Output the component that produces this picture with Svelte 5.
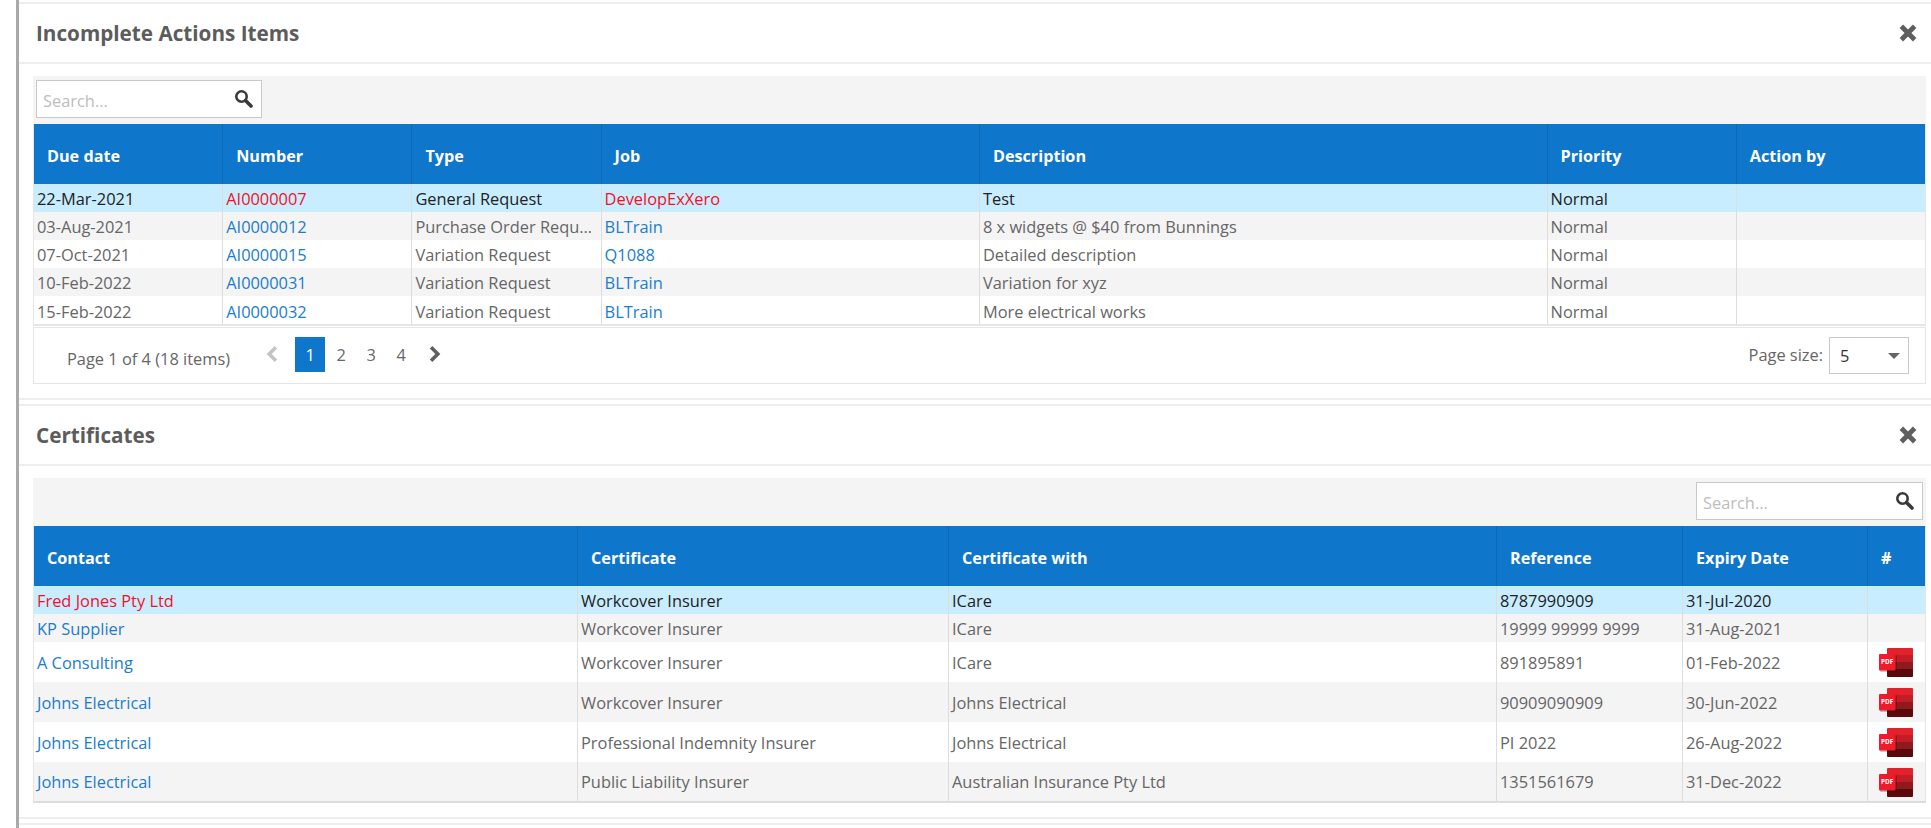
<script>
  const actions = [
    ['22-Mar-2021','AI0000007','General Request','DevelopExXero','Test','Normal',''],
    ['03-Aug-2021','AI0000012','Purchase Order Request','BLTrain','8 x widgets @ $40 from Bunnings','Normal',''],
    ['07-Oct-2021','AI0000015','Variation Request','Q1088','Detailed description','Normal',''],
    ['10-Feb-2022','AI0000031','Variation Request','BLTrain','Variation for xyz','Normal',''],
    ['15-Feb-2022','AI0000032','Variation Request','BLTrain','More electrical works','Normal','']
  ];
  const actionHead = ['Due date','Number','Type','Job','Description','Priority','Action by'];
  const certHead = ['Contact','Certificate','Certificate with','Reference','Expiry Date','#'];
  const certs = [
    ['Fred Jones Pty Ltd','Workcover Insurer','ICare','8787990909','31-Jul-2020',false],
    ['KP Supplier','Workcover Insurer','ICare','19999 99999 9999','31-Aug-2021',false],
    ['A Consulting','Workcover Insurer','ICare','891895891','01-Feb-2022',true],
    ['Johns Electrical','Workcover Insurer','Johns Electrical','90909090909','30-Jun-2022',true],
    ['Johns Electrical','Professional Indemnity Insurer','Johns Electrical','PI 2022','26-Aug-2022',true],
    ['Johns Electrical','Public Liability Insurer','Australian Insurance Pty Ltd','1351561679','31-Dec-2022',true]
  ];
</script>

{#snippet closeIcon()}
  <svg class="close" viewBox="0 0 18 18" aria-label="Close"><path d="M3 3 15 15M15 3 3 15" stroke="#5f5f5f" stroke-width="4.4" fill="none"/></svg>
{/snippet}

{#snippet searchBox()}
  <div class="search">
    <span class="ph">Search...</span>
    <svg class="mag" viewBox="0 0 19 19"><circle cx="7.5" cy="7.5" r="5.2" fill="none" stroke="#3a3a3a" stroke-width="2.6"/><path d="M11.5 11.5 17 17" stroke="#3a3a3a" stroke-width="3.6" stroke-linecap="round"/></svg>
  </div>
{/snippet}

{#snippet pdf()}
  <svg class="pdf" viewBox="0 0 34 29">
    <rect x="8" y="0" width="26" height="8" rx="1" fill="#e3202b"/>
    <rect x="8" y="7" width="26" height="8" fill="#bf1e27"/>
    <rect x="8" y="14" width="26" height="8" fill="#8f1a1e"/>
    <rect x="8" y="21" width="26" height="8" rx="1" fill="#5a0a0c"/>
    <rect x="1" y="7" width="17" height="17" rx="1" fill="#000" opacity=".22"/>
    <rect x="0" y="6" width="16.5" height="16.5" rx="1" fill="#ee1c2a"/>
    <text x="8.2" y="16.4" text-anchor="middle" class="pdft">PDF</text>
  </svg>
{/snippet}

<div class="page">
  <section class="panel">
    <header class="phead"><h2>Incomplete Actions Items</h2>{@render closeIcon()}</header>
    <div class="pbody">
      <div class="toolbar">{@render searchBox()}</div>
      <table class="grid actions">
        <thead><tr>{#each actionHead as h}<th>{h}</th>{/each}</tr></thead>
        <tbody>
          {#each actions as r, i}
            <tr class:sel={i === 0} class:alt={i % 2 === 1}>
              <td>{r[0]}</td>
              <td class="link">{r[1]}</td>
              <td>{r[2]}</td>
              <td class="link">{r[3]}</td>
              <td>{r[4]}</td>
              <td>{r[5]}</td>
              <td>{r[6]}</td>
            </tr>
          {/each}
        </tbody>
      </table>
      <div class="pager">
        <span class="info">Page 1 of 4 (18 items)</span>
        <svg class="chev prev" viewBox="0 0 12 16"><path d="M9.5 2 3.5 8l6 6" fill="none" stroke="#c4c4c4" stroke-width="3.2"/></svg>
        <span class="pn cur">1</span><span class="pn">2</span><span class="pn">3</span><span class="pn">4</span>
        <svg class="chev next" viewBox="0 0 12 16"><path d="M2.5 2l6 6-6 6" fill="none" stroke="#5f5f5f" stroke-width="3.2"/></svg>
        <span class="size">Page size:</span>
        <div class="select"><span>5</span><i class="caret"></i></div>
      </div>
    </div>
  </section>

  <section class="panel second">
    <header class="phead"><h2>Certificates</h2>{@render closeIcon()}</header>
    <div class="pbody">
      <div class="toolbar right">{@render searchBox()}</div>
      <table class="grid certs">
        <thead><tr>{#each certHead as h}<th>{h}</th>{/each}</tr></thead>
        <tbody>
          {#each certs as r, i}
            <tr class:sel={i === 0} class:alt={i % 2 === 1}>
              <td class="link">{r[0]}</td>
              <td>{r[1]}</td>
              <td>{r[2]}</td>
              <td>{r[3]}</td>
              <td>{r[4]}</td>
              <td class="ic">{#if r[5]}{@render pdf()}{/if}</td>
            </tr>
          {/each}
        </tbody>
      </table>
    </div>
  </section>
  <div class="next-panel"></div>
</div>

<style>
  :global(body) { margin: 0; background: #fff; }
  .page {
    margin-left: 16px;
    border-left: 3px solid #a9a9a9;
    height: 828px;
    box-sizing: border-box;
    padding-top: 2px;
    overflow: hidden;
    font-family: "Open Sans", "Noto Sans", sans-serif;
    font-size: 16.4px;
    color: #666;
  }
  .panel {
    border-top: 2px solid #eee;
    border-bottom: 2px solid #eee;
    margin-bottom: 4px;
  }
  .phead {
    height: 58px;
    border-bottom: 2px solid #eee;
    display: flex;
    align-items: center;
    justify-content: space-between;
    padding: 0 13px 0 17px;
  }
  h2 {
    margin: 0;
    font-size: 20.7px;
    font-weight: 700;
    color: #5c5c5c;
  }
  .close { width: 20px; height: 20px; }
  .pbody { padding: 12px 0 14px 14px; margin-right: 5px; }
  .toolbar {
    background: #f4f4f4;
    height: 48px;
    display: flex;
    align-items: flex-start;
    padding: 4px 3px 0;
    box-sizing: border-box;
  }
  .toolbar.right { justify-content: flex-end; }
  .search {
    width: 226px;
    height: 38px;
    box-sizing: border-box;
    border: 1px solid #c9c9c9;
    background: #fff;
    display: flex;
    align-items: center;
    justify-content: space-between;
    padding: 0 8px 0 6px;
  }
  .toolbar.right .search { width: 227px; }
  .ph { color: #bdbdbd; padding-top: 2px; }
  .mag { width: 19px; height: 19px; margin-top: -2px; }
  .grid {
    width: 100%;
    table-layout: fixed;
    border-collapse: collapse;
  }
  .grid th {
    background: #0e76cb;
    color: #fff;
    font-weight: 700;
    font-size: 16.2px;
    text-align: left;
    height: 60px;
    padding: 3px 13px 0;
    border-right: 1px solid #0c69b5;
    box-sizing: border-box;
  }
  .grid th:last-child, .grid td:last-child { border-right: 0; }
  .grid td {
    height: 28px;
    padding: 1px 3px 0;
    border-right: 1px solid #ddd;
    white-space: nowrap;
    overflow: hidden;
    text-overflow: ellipsis;
    box-sizing: border-box;
    line-height: 20px;
  }
  .grid tr.alt td { background: #f4f4f4; }
  .grid tr.sel td { background: #c8edff; color: #222; }
  .link { color: #1a7dd0; }
  .grid tr.sel td.link { color: #f5101f; }
  .actions { border: 1px solid #e6e6e6; border-top: 0; border-bottom: 2px solid #e6e6e6; }
  .actions tbody tr:nth-child(n+3) td { padding-top: 2px; }
  .actions tbody tr:nth-child(5) td { height: 29px; padding-top: 3px; }
  .actions th:nth-child(4) { width: 20%; }
  .actions th:nth-child(5) { width: 30%; }
  .actions th:nth-child(1), .actions th:nth-child(2), .actions th:nth-child(3),
  .actions th:nth-child(6), .actions th:nth-child(7) { width: 10%; }
  .certs { border: 1px solid #e6e6e6; border-top: 0; border-bottom: 2px solid #ddd; }
  .certs th:nth-child(1) { width: 544px; }
  .certs th:nth-child(2) { width: 371px; }
  .certs th:nth-child(3) { width: 548px; }
  .certs th:nth-child(4) { width: 186px; }
  .certs th:nth-child(5) { width: 185px; }
  .certs tr:nth-child(n+3) td { height: 40px; }
  .ic { text-align: center; }
  .pdf { width: 34px; height: 29px; display: block; margin: 0 0 0 8px; }
  .pdft { font-size: 6.4px; font-weight: 700; fill: #fff; font-family: "Open Sans", sans-serif; }
  .pager {
    height: 57px;
    margin-top: 1px;
    border: 1px solid #e6e6e6;
    display: flex;
    align-items: flex-start;
    padding-top: 9px;
    box-sizing: border-box;
  }
  .info { margin: 10px 35px 0 33px; }
  .chev { width: 14px; height: 18px; margin-top: 8px; }
  .prev { margin-right: 16px; }
  .next { margin-left: 13px; }
  .pn { width: 30px; height: 35px; display: flex; align-items: center; justify-content: center; }
  .pn.cur { background: #0e76cb; color: #fff; }
  .pn + .pn { position: relative; left: 1px; }
  .size { margin: 6px 6px 0 auto; }
  .select {
    width: 80px;
    height: 37px;
    box-sizing: border-box;
    border: 1px solid #c9c9c9;
    margin-right: 16px;
    display: flex;
    align-items: center;
    justify-content: space-between;
    padding: 0 8px 0 10px;
    color: #333;
  }
  .caret { width: 0; height: 0; border: 6px solid transparent; border-top: 6px solid #666; border-bottom: 0; }
  .next-panel { border-top: 2px solid #eee; }
</style>
